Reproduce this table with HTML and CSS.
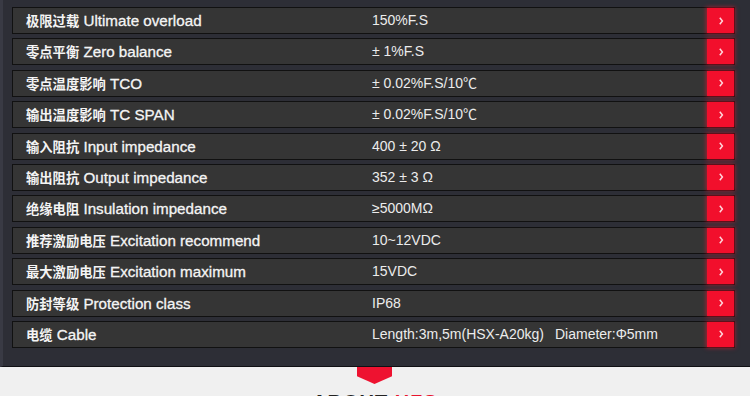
FILE: index.html
```html
<!DOCTYPE html>
<html lang="zh">
<head>
<meta charset="utf-8">
<link rel="stylesheet" href="styles.css">
</head>
<body>
<div class="panel">
  <div class="row"><div class="label"><span class="zh">极限过载</span> Ultimate overload</div><div class="value">150%F.S</div><div class="btn"><svg width="6" height="10" viewBox="0 0 6 10"><polyline points="1.8,1.8 4.4,5 1.8,8.2" /></svg></div></div>
  <div class="row"><div class="label"><span class="zh">零点平衡</span> Zero balance</div><div class="value">± 1%F.S</div><div class="btn"><svg width="6" height="10" viewBox="0 0 6 10"><polyline points="1.8,1.8 4.4,5 1.8,8.2" /></svg></div></div>
  <div class="row"><div class="label"><span class="zh">零点温度影响</span> TCO</div><div class="value">± 0.02%F.S/10℃</div><div class="btn"><svg width="6" height="10" viewBox="0 0 6 10"><polyline points="1.8,1.8 4.4,5 1.8,8.2" /></svg></div></div>
  <div class="row"><div class="label"><span class="zh">输出温度影响</span> TC SPAN</div><div class="value">± 0.02%F.S/10℃</div><div class="btn"><svg width="6" height="10" viewBox="0 0 6 10"><polyline points="1.8,1.8 4.4,5 1.8,8.2" /></svg></div></div>
  <div class="row"><div class="label"><span class="zh">输入阻抗</span> Input impedance</div><div class="value">400 ± 20 Ω</div><div class="btn"><svg width="6" height="10" viewBox="0 0 6 10"><polyline points="1.8,1.8 4.4,5 1.8,8.2" /></svg></div></div>
  <div class="row"><div class="label"><span class="zh">输出阻抗</span> Output impedance</div><div class="value">352 ± 3 Ω</div><div class="btn"><svg width="6" height="10" viewBox="0 0 6 10"><polyline points="1.8,1.8 4.4,5 1.8,8.2" /></svg></div></div>
  <div class="row"><div class="label"><span class="zh">绝缘电阻</span> Insulation impedance</div><div class="value">≥5000MΩ</div><div class="btn"><svg width="6" height="10" viewBox="0 0 6 10"><polyline points="1.8,1.8 4.4,5 1.8,8.2" /></svg></div></div>
  <div class="row"><div class="label"><span class="zh">推荐激励电压</span> Excitation recommend</div><div class="value">10~12VDC</div><div class="btn"><svg width="6" height="10" viewBox="0 0 6 10"><polyline points="1.8,1.8 4.4,5 1.8,8.2" /></svg></div></div>
  <div class="row"><div class="label"><span class="zh">最大激励电压</span> Excitation maximum</div><div class="value">15VDC</div><div class="btn"><svg width="6" height="10" viewBox="0 0 6 10"><polyline points="1.8,1.8 4.4,5 1.8,8.2" /></svg></div></div>
  <div class="row"><div class="label"><span class="zh">防封等级</span> Protection class</div><div class="value">IP68</div><div class="btn"><svg width="6" height="10" viewBox="0 0 6 10"><polyline points="1.8,1.8 4.4,5 1.8,8.2" /></svg></div></div>
  <div class="row"><div class="label"><span class="zh">电缆</span> Cable</div><div class="value">Length:3m,5m(HSX-A20kg)<span class="dia">Diameter:Φ5mm</span></div><div class="btn"><svg width="6" height="10" viewBox="0 0 6 10"><polyline points="1.8,1.8 4.4,5 1.8,8.2" /></svg></div></div>
</div>
<div class="bottom">
  <div class="marker"></div>
  <div class="heading">ABOUT <span class="red">HZS</span></div>
</div>
</body>
</html>
```
FILE: styles.css
```css
html, body {
  margin: 0;
  padding: 0;
}
body {
  width: 750px;
  height: 396px;
  overflow: hidden;
  background: #f0f0f0;
  font-family: "Liberation Sans", Arial, "Noto Sans CJK SC", sans-serif;
}
.panel {
  box-sizing: border-box;
  height: 367px;
  background: #2d2e36;
  border-left: 3px solid #393a44;
  border-bottom: 1px solid #101014;
  padding: 7px 15px 0 9px;
  display: flex;
  flex-direction: column;
  gap: 4.4px;
}
.row {
  box-sizing: border-box;
  height: 27px;
  display: flex;
  align-items: stretch;
  background: #353535;
  border: 1px solid #111111;
}
.label {
  width: 359px;
  padding-left: 13px;
  box-sizing: border-box;
  line-height: 25px;
  color: #f4f4f4;
  font-size: 15.2px;
  -webkit-text-stroke: 0.3px #f4f4f4;
  white-space: pre;
}
.zh {
  font-family: "Noto Sans CJK SC", sans-serif;
  font-size: 13.3px;
  font-weight: bold;
  -webkit-text-stroke: 0;
}
.value {
  flex: 1;
  line-height: 25px;
  color: #ececec;
  font-size: 14px;
  white-space: pre;
}
.dia {
  margin-left: 11px;
}
.btn {
  width: 27px;
  background: #f20f2c;
  box-shadow: 0 0 4px 1px rgba(255, 20, 50, 0.55);
  display: flex;
  align-items: center;
  justify-content: center;
}
.btn svg polyline {
  fill: none;
  stroke: #ffd6dc;
  stroke-width: 1.5;
}
.bottom {
  display: flex;
  flex-direction: column;
  align-items: center;
}
.marker {
  width: 35px;
  height: 17px;
  margin-left: -1px;
  background: #ee1230;
  clip-path: polygon(0 0, 100% 0, 100% 55%, 50% 100%, 0 55%);
}
.heading {
  margin-top: 7px;
  font-size: 20px;
  font-weight: bold;
  color: #222;
  letter-spacing: 1px;
}
.heading .red {
  color: #e8142e;
}
```
